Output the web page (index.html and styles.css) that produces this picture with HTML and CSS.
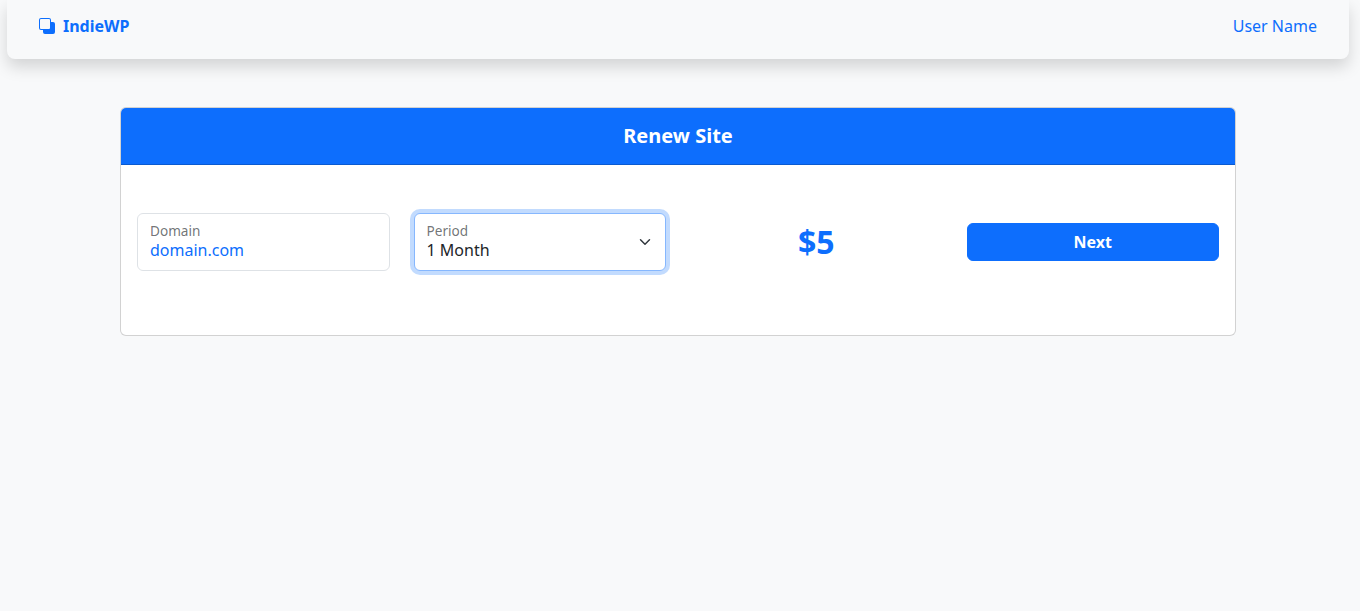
FILE: index.html
```html
<!DOCTYPE html>
<html lang="en">
<head>
<meta charset="utf-8">
<title>IndieWP - Renew Site</title>
<link rel="stylesheet" href="styles.css">
</head>
<body>
<header class="navbar">
  <a class="brand" href="#">
    <svg class="brand-icon" viewBox="0 0 16 16" fill="currentColor" aria-hidden="true"><path d="M0 2a2 2 0 0 1 2-2h8a2 2 0 0 1 2 2v2h2a2 2 0 0 1 2 2v8a2 2 0 0 1-2 2H6a2 2 0 0 1-2-2v-2H2a2 2 0 0 1-2-2V2zm2-1a1 1 0 0 0-1 1v8a1 1 0 0 0 1 1h8a1 1 0 0 0 1-1V2a1 1 0 0 0-1-1H2z"/></svg>
    <span>IndieWP</span>
  </a>
  <a class="user" href="#">User Name</a>
</header>
<main class="card">
  <h1 class="card-header">Renew Site</h1>
  <div class="card-body">
    <div class="field">
      <span class="field-label">Domain</span>
      <span class="field-value link">domain.com</span>
    </div>
    <div class="field field-focus">
      <span class="field-label">Period</span>
      <span class="field-value">1 Month</span>
      <svg class="chevron" viewBox="0 0 16 16" fill="none" stroke="#343a40" stroke-width="2" stroke-linecap="round" stroke-linejoin="round" aria-hidden="true"><path d="m2 5 6 6 6-6"/></svg>
    </div>
    <div class="price">$5</div>
    <button class="next" type="button">Next</button>
  </div>
</main>
</body>
</html>
```
FILE: styles.css
```css
* { box-sizing: border-box; }
html, body { height: 100%; }
body {
  margin: 0;
  background: #f8f9fa;
  color: #212529;
  font-family: "Noto Sans", sans-serif;
  font-size: 16px;
  line-height: 1.5;
}
a { color: #0d6efd; text-decoration: none; }
.navbar {
  display: flex;
  align-items: center;
  justify-content: space-between;
  height: 59px;
  margin: 0 11px 0 7px;
  padding: 0 32px;
  background: #f8f9fa;
  border-radius: 0 0 8px 8px;
  box-shadow: 0 8px 16px rgba(0, 0, 0, .15);
}
.brand {
  display: flex;
  align-items: center;
  gap: 8px;
  font-weight: 700;
  margin-top: -7px;
}
.brand-icon { width: 16px; height: 16px; display: block; }
.user { margin-top: -7px; }
.card {
  margin: 48px 124px 0 120px;
  background: #fff;
  border: 1px solid rgba(0, 0, 0, .176);
  border-radius: 6px;
  overflow: hidden;
}
.card-header {
  margin: 0;
  height: 57px;
  background: #0d6efd;
  border-bottom: 1px solid rgba(0, 0, 0, .176);
  color: #fff;
  font-size: 20px;
  font-weight: 700;
  line-height: 56px;
  text-align: center;
}
.card-body {
  display: grid;
  grid-template-columns: repeat(4, 1fr);
  gap: 24px;
  align-items: center;
  padding: 48px 16px 64px;
}
.field {
  position: relative;
  display: flex;
  flex-direction: column;
  height: 58px;
  padding: 8px 12px;
  border: 1px solid #dee2e6;
  border-radius: 6px;
  background: #fff;
}
.field-focus {
  border-color: #86b7fe;
  box-shadow: 0 0 0 4px rgba(13, 110, 253, .25);
}
.field-label {
  font-size: 13.6px;
  line-height: 18px;
  color: rgba(33, 37, 41, .65);
}
.field-value { line-height: 21px; font-size: 16px; }
.link { color: #0d6efd; }
.chevron {
  position: absolute;
  right: 14px;
  top: 22px;
  width: 12px;
  height: 12px;
}
.price {
  color: #0d6efd;
  font-size: 32px;
  font-weight: 700;
  line-height: 38px;
  text-align: center;
}
.next {
  height: 38px;
  padding: 0;
  background: #0d6efd;
  border: 1px solid #0d6efd;
  border-radius: 6px;
  color: #fff;
  font: 700 16px/1.5 "Noto Sans", sans-serif;
}
```
